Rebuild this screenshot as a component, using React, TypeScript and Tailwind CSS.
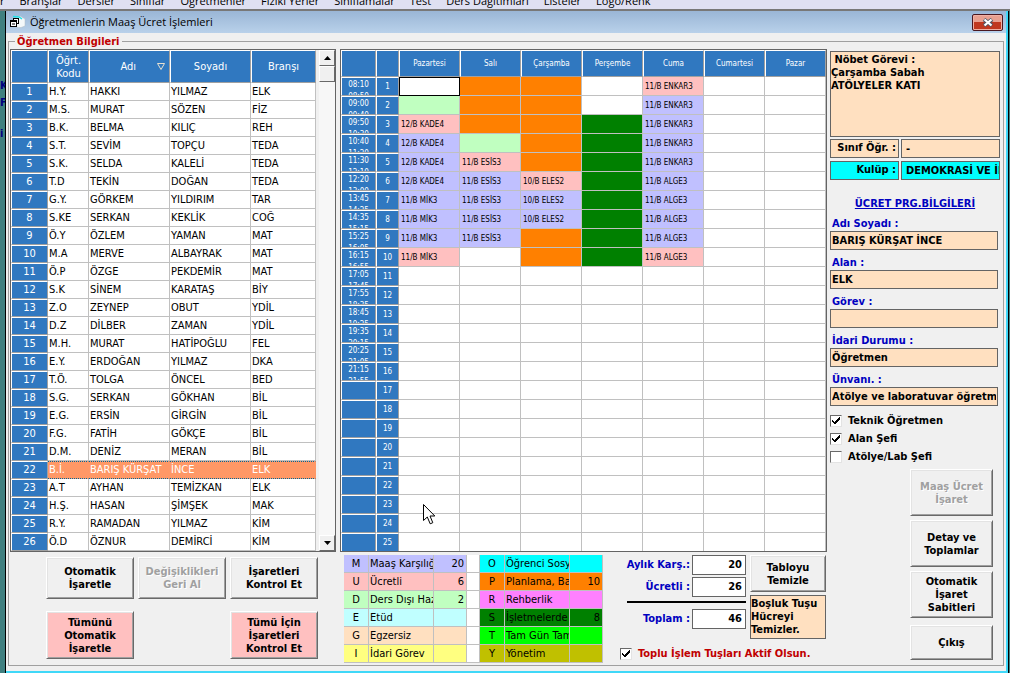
import React, { useState } from "react";
import clsx from "clsx";

const menuItems = [
  "Branşlar",
  "Dersler",
  "Sınıflar",
  "Öğretmenler",
  "Fiziki Yerler",
  "Sınıflamalar",
  "Test",
  "Ders Dağıtımları",
  "Listeler",
  "Logo/Renk",
];

const teachers = [
  ["H.Y.", "HAKKI", "YILMAZ", "ELK"],
  ["M.S.", "MURAT", "SÖZEN", "FİZ"],
  ["B.K.", "BELMA", "KILIÇ", "REH"],
  ["S.T.", "SEVİM", "TOPÇU", "TEDA"],
  ["S.K.", "SELDA", "KALELİ", "TEDA"],
  ["T.D", "TEKİN", "DOĞAN", "TEDA"],
  ["G.Y.", "GÖRKEM", "YILDIRIM", "TAR"],
  ["S.KE", "SERKAN", "KEKLİK", "COĞ"],
  ["Ö.Y", "ÖZLEM", "YAMAN", "MAT"],
  ["M.A", "MERVE", "ALBAYRAK", "MAT"],
  ["Ö.P", "ÖZGE", "PEKDEMİR", "MAT"],
  ["S.K", "SİNEM", "KARATAŞ", "BİY"],
  ["Z.O", "ZEYNEP", "OBUT", "YDİL"],
  ["D.Z", "DİLBER", "ZAMAN", "YDİL"],
  ["M.H.", "MURAT", "HATİPOĞLU", "FEL"],
  ["E.Y.", "ERDOĞAN", "YILMAZ", "DKA"],
  ["T.Ö.", "TOLGA", "ÖNCEL", "BED"],
  ["S.G.", "SERKAN", "GÖKHAN", "BİL"],
  ["E.G.", "ERSİN", "GİRGİN", "BİL"],
  ["F.G.", "FATİH", "GÖKÇE", "BİL"],
  ["D.M.", "DENİZ", "MERAN", "BİL"],
  ["B.İ.", "BARIŞ KÜRŞAT", "İNCE", "ELK"],
  ["A.T", "AYHAN", "TEMİZKAN", "ELK"],
  ["H.Ş.", "HASAN", "ŞİMŞEK", "MAK"],
  ["R.Y.", "RAMADAN", "YILMAZ", "KİM"],
  ["Ö.D", "ÖZNUR", "DEMİRCİ", "KİM"],
];

const days = ["Pazartesi", "Salı", "Çarşamba", "Perşembe", "Cuma", "Cumartesi", "Pazar"];

const hours = [
  ["08:10", "08:50"],
  ["09:00", "09:40"],
  ["09:50", "10:30"],
  ["10:40", "11:20"],
  ["11:30", "12:10"],
  ["12:20", "13:00"],
  ["13:45", "14:25"],
  ["14:35", "15:15"],
  ["15:25", "16:05"],
  ["16:15", "16:55"],
  ["17:05", "17:45"],
  ["17:55", "18:35"],
  ["18:45", "19:25"],
  ["19:35", "20:15"],
  ["20:25", "21:05"],
  ["21:15", "21:55"],
];

// first letter is the mark of the lesson, the rest is the lesson itself
const schedule: string[][] = [
  ["X", "P", "P", "", "U11/B ENKAR3"],
  ["D", "P", "P", "", "M11/B ENKAR3"],
  ["U12/B KADE4", "P", "P", "S", "M11/B ENKAR3"],
  ["M12/B KADE4", "D", "P", "S", "M11/B ENKAR3"],
  ["M12/B KADE4", "U11/B ESİS3", "P", "S", "M11/B ENKAR3"],
  ["M12/B KADE4", "M11/B ESİS3", "U10/B ELES2", "S", "M11/B ALGE3"],
  ["M11/B MİK3", "M11/B ESİS3", "M10/B ELES2", "S", "M11/B ALGE3"],
  ["M11/B MİK3", "M11/B ESİS3", "M10/B ELES2", "S", "M11/B ALGE3"],
  ["M11/B MİK3", "M11/B ESİS3", "P", "S", "M11/B ALGE3"],
  ["U11/B MİK3", "", "P", "S", "U11/B ALGE3"],
];

const markColors: Record<string, string> = {
  M: "bg-[#c0c0ff]",
  U: "bg-[#ffc0c0]",
  D: "bg-[#c0ffc0]",
  E: "bg-[#c0ffff]",
  G: "bg-[#ffe0c0]",
  I: "bg-[#ffff80]",
  O: "bg-[#00ffff]",
  P: "bg-[#ff8000]",
  R: "bg-[#ff80ff]",
  S: "bg-[#008000]",
  T: "bg-[#00ff00]",
  Y: "bg-[#c0c000]",
  X: "bg-white outline-1 -outline-offset-1 outline-black",
};

const legendRows = [
  [["M", "Maaş Karşılığı", "20"], ["O", "Öğrenci Sosyal", ""]],
  [["U", "Ücretli", "6"], ["P", "Planlama, Bakım", "10"]],
  [["D", "Ders Dışı Hazırlık", "2"], ["R", "Rehberlik", ""]],
  [["E", "Etüd", ""], ["S", "İşletmelerde", "8"]],
  [["G", "Egzersiz", ""], ["T", "Tam Gün Tam Yıl", ""]],
  [["I", "İdari Görev", ""], ["Y", "Yönetim", ""]],
];

const fields = [
  { id: "name", label: "Adı Soyadı :", value: "BARIŞ KÜRŞAT İNCE" },
  { id: "area", label: "Alan :", value: "ELK" },
  { id: "duty", label: "Görev :", value: "" },
  { id: "admin", label: "İdari Durumu :", value: "Öğretmen" },
  { id: "title", label: "Ünvanı. :", value: "Atölye ve laboratuvar öğretmeni" },
];

const headCell =
  "border-t border-l border-r border-b border-t-white border-l-white border-r-[#a0a0a0] border-b-[#a0a0a0] bg-[#3078c0] p-0 font-normal text-white overflow-hidden";
const bodyCell = "border-r border-b border-[#c0c0c0] p-0 overflow-hidden whitespace-nowrap";

interface ButtonProps {
  lines: string[];
  className?: string;
  disabled?: boolean;
}

function ClassicButton({ lines, className, disabled }: ButtonProps) {
  return (
    <button
      type="button"
      disabled={disabled}
      className={clsx(
        "flex shrink-0 flex-col items-center justify-center border border-t-white border-l-white border-r-[#696969] border-b-[#696969] font-bold leading-[13px] shadow-[inset_1px_1px_0_#e3e3e3,inset_-1px_-1px_0_#a0a0a0]",
        disabled && "text-[#a0a0a0] [text-shadow:1px_1px_0_white]",
        className
      )}
    >
      {lines.map((line) => (
        <span key={line}>{line}</span>
      ))}
    </button>
  );
}

interface CheckProps {
  label: string;
  defaultChecked?: boolean;
  className?: string;
}

function CheckLine({ label, defaultChecked, className }: CheckProps) {
  return (
    <label className={clsx("flex h-[18px] items-center gap-1.5 font-bold whitespace-nowrap", className)}>
      <span className="relative block size-3">
        <input
          type="checkbox"
          defaultChecked={defaultChecked}
          className="peer block size-3 appearance-none border border-t-[#696969] border-l-[#696969] border-r-[#e3e3e3] border-b-[#e3e3e3] bg-white"
        />
        <svg
          viewBox="0 0 12 12"
          className="pointer-events-none absolute inset-0 hidden size-3 peer-checked:block"
          shapeRendering="crispEdges"
        >
          <path d="M2 4v3l2.5 2.5L10 4V2L4.5 7z" fill="black" />
        </svg>
      </span>
      {label}
    </label>
  );
}

function ScrollBar() {
  const part =
    "flex h-4 w-4 shrink-0 items-center justify-center border border-t-white border-l-white border-r-[#696969] border-b-[#696969] bg-[#f0f0f0]";
  return (
    <div className="flex w-4 shrink-0 flex-col bg-[#f7f7f7]">
      <button type="button" aria-label="Yukarı" className={part}>
        <svg viewBox="0 0 7 4" className="h-1 w-[7px]">
          <path d="M0 4L3.5 0L7 4z" />
        </svg>
      </button>
      <div className={part} />
      <div className="flex-1" />
      <button type="button" aria-label="Aşağı" className={part}>
        <svg viewBox="0 0 7 4" className="h-1 w-[7px]">
          <path d="M0 0L3.5 4L7 0z" />
        </svg>
      </button>
    </div>
  );
}

function TeacherTable() {
  const [selected, setSelected] = useState(21);

  return (
    <div className="flex h-[503px] overflow-hidden border border-[#646464] bg-[#f0f0f0]">
      <table className="w-[305px] table-fixed border-separate border-spacing-0 bg-white">
        <colgroup>
          <col className="w-[37px]" />
          <col className="w-[41px]" />
          <col className="w-[81px]" />
          <col className="w-[81px]" />
          <col />
        </colgroup>
        <thead>
          <tr className="h-[33px]">
            <th className={headCell}></th>
            <th className={clsx(headCell, "leading-[13px]")}>
              Öğrt.
              <br />
              Kodu
            </th>
            <th className={headCell}>
              <span className="flex items-center justify-end gap-[21px] pr-1">
                Adı
                <svg viewBox="0 0 8 7" className="h-[7px] w-2" fill="none" stroke="#e8e0d0">
                  <path d="M0.5 0.5h7L4 6.5z" />
                </svg>
              </span>
            </th>
            <th className={headCell}>Soyadı</th>
            <th className={headCell}>Branşı</th>
          </tr>
        </thead>
        <tbody>
          {teachers.map((row, i) => (
            <tr
              key={i}
              onClick={() => setSelected(i)}
              className={clsx("h-[18px] leading-4", i === selected && "bg-[#ff9866] text-white")}
            >
              <th className={headCell}>{i + 1}</th>
              {row.map((cell, j) => (
                <td
                  key={j}
                  className={clsx(
                    bodyCell,
                    "pl-px",
                    i === selected && "border-t border-dotted border-y-[#006799] border-r-[#ff9866]"
                  )}
                >
                  {cell}
                </td>
              ))}
            </tr>
          ))}
        </tbody>
      </table>
      <div className="flex-1" />
      <ScrollBar />
    </div>
  );
}

function ScheduleTable() {
  return (
    <div className="relative h-[503px] overflow-hidden border border-[#646464] bg-white">
      <table className="w-full table-fixed border-separate border-spacing-0 text-[8px]">
        <colgroup>
          <col className="w-[35px]" />
          <col className="w-[23px]" />
        </colgroup>
        <thead>
          <tr className="h-[27px]">
            <th className={headCell}></th>
            <th className={headCell}></th>
            {days.map((day) => (
              <th key={day} className={headCell}>
                {day}
              </th>
            ))}
          </tr>
        </thead>
        <tbody>
          {Array.from({ length: 25 }, (_, i) => (
            <tr key={i} className="h-[19px] leading-[17px]">
              <th className={headCell}>
                <div className="h-[17px] overflow-hidden pt-px leading-3">
                  {hours[i]?.map((time) => (
                    <div key={time}>{time}</div>
                  ))}
                </div>
              </th>
              <th className={headCell}>{i + 1}</th>
              {days.map((day, j) => {
                const entry = schedule[i]?.[j] ?? "";
                return (
                  <td key={day} className={clsx(bodyCell, "pl-0.5", entry && markColors[entry[0]])}>
                    {entry.slice(1)}
                  </td>
                );
              })}
            </tr>
          ))}
        </tbody>
      </table>
      {/* mouse pointer */}
      <svg viewBox="0 0 12 21" className="absolute top-[454px] left-[82px] h-[21px] w-3">
        <path
          d="M0.5 0.5V16.5L4.3 13L7.2 19.8L9.8 18.7L7 12H11.8z"
          fill="white"
          stroke="black"
          strokeWidth="1"
        />
      </svg>
    </div>
  );
}

function LegendTable() {
  return (
    <table className="w-[259px] shrink-0 table-fixed self-start border-separate border-spacing-0 bg-white">
      <colgroup>
        <col className="w-[25px]" />
        <col className="w-[65px]" />
        <col className="w-[33px]" />
        <col className="w-[13px]" />
        <col className="w-[25px]" />
        <col className="w-[65px]" />
        <col className="w-[33px]" />
      </colgroup>
      <tbody>
        {legendRows.map(([left, right]) => (
          <tr key={left[0]} className="h-[18px] leading-[17px]">
            <td className={clsx(bodyCell, "text-center", markColors[left[0]])}>{left[0]}</td>
            <td className={clsx(bodyCell, "pl-px", markColors[left[0]])}>{left[1]}</td>
            <td className={clsx(bodyCell, "pr-0.5 text-right", markColors[left[0]])}>{left[2]}</td>
            <td className={bodyCell}></td>
            <td className={clsx(bodyCell, "text-center", markColors[right[0]])}>{right[0]}</td>
            <td className={clsx(bodyCell, "pl-px", markColors[right[0]])}>{right[1]}</td>
            <td className={clsx(bodyCell, "pr-0.5 text-right", markColors[right[0]])}>{right[2]}</td>
          </tr>
        ))}
      </tbody>
    </table>
  );
}

function TotalField({ id, label, value }: { id: string; label: string; value: string }) {
  return (
    <div className="flex items-center justify-end gap-0.5">
      <label htmlFor={id} className="font-bold whitespace-nowrap text-[#0000c0]">
        {label}
      </label>
      <input
        id={id}
        readOnly
        value={value}
        className="h-5 w-[54px] rounded-none border border-[#646464] bg-white pr-[3px] pb-0.5 text-right font-bold outline-none"
      />
    </div>
  );
}

function InfoPanel() {
  return (
    <div className="flex w-[170px] shrink-0 flex-col pt-0.5">
      <textarea
        aria-label="Nöbet Görevi"
        readOnly
        value={" Nöbet Görevi :\nÇarşamba Sabah\nATÖLYELER KATI"}
        className="block h-[86px] w-full resize-none overflow-hidden border border-[#646464] bg-[#ffe0c0] pt-px font-bold leading-[13px] outline-none"
      />
      <div className="mt-0.5 flex gap-0.5">
        <label htmlFor="class" className="h-[19px] w-[69px] border border-[#646464] bg-[#ffe0c0] pr-0.5 text-right font-bold">
          Sınıf Öğr. :
        </label>
        <input
          id="class"
          readOnly
          value="-"
          className="h-[19px] min-w-0 flex-1 border border-[#646464] bg-[#ffe0c0] pl-1 font-bold outline-none"
        />
      </div>
      <div className="mt-[3px] flex gap-0.5">
        <label htmlFor="club" className="h-[19px] w-[69px] border border-[#646464] bg-[#00ffff] pr-0.5 text-right font-bold">
          Kulüp :
        </label>
        <input
          id="club"
          readOnly
          value="DEMOKRASİ VE İNSAN HAKLARI"
          className="h-[19px] min-w-0 flex-1 border border-[#646464] bg-[#00ffff] pl-1 font-bold outline-none"
        />
      </div>
      <h2 className="mt-4 text-center font-bold text-[#0000c0] underline">ÜCRET PRG.BİLGİLERİ</h2>
      <div className="mt-[5px] flex flex-col gap-1.5 pr-0.5">
        {fields.map((field) => (
          <div key={field.id}>
            <label htmlFor={field.id} className="block h-[14px] pl-0.5 font-bold leading-[14px] text-[#0000c0]">
              {field.label}
            </label>
            <input
              id={field.id}
              readOnly
              value={field.value}
              className="block h-[19px] w-full border border-[#646464] bg-[#ffe0c0] px-px font-bold outline-none"
            />
          </div>
        ))}
      </div>
      <div className="mt-1.5 flex flex-col">
        <CheckLine label="Teknik Öğretmen" defaultChecked />
        <CheckLine label="Alan Şefi" defaultChecked />
        <CheckLine label="Atölye/Lab Şefi" />
      </div>
      <div className="mt-[3px] mr-[7px] flex flex-col items-end gap-1">
        <ClassicButton lines={["Maaş Ücret", "İşaret"]} disabled className="h-[47px] w-[83px]" />
        <ClassicButton lines={["Detay ve", "Toplamlar"]} className="h-[47px] w-[83px]" />
        <ClassicButton lines={["Otomatik", "İşaret", "Sabitleri"]} className="h-[47px] w-[83px]" />
        <ClassicButton lines={["Çıkış"]} className="mt-[3px] h-[35px] w-[83px]" />
      </div>
    </div>
  );
}

export default function App() {
  return (
    <div className="flex min-h-screen flex-col overflow-hidden bg-[#408080] font-['DejaVu_Sans_Condensed','DejaVu_Sans',sans-serif] text-[11px] leading-4 text-black">
      <nav className="flex h-[11px] items-end gap-[15px] overflow-hidden border-b-2 border-[#787878] bg-[#dfe0f2] font-['Open_Sans',sans-serif] whitespace-nowrap">
        <span>r</span>
        {menuItems.map((item) => (
          <a key={item} href="#">
            {item}
          </a>
        ))}
      </nav>

      <div className="flex flex-1 pr-px pb-px">
        <div className="w-[5px] shrink-0 overflow-hidden pt-[66px] font-bold leading-[17px] text-[#000080]">
          <div>K</div>
          <div>F</div>
          <div className="pt-3.5">i</div>
        </div>

        <main className="flex min-w-0 flex-1 flex-col border-x border-b border-black">
          <div className="flex flex-1 flex-col border-r-2 border-b-2 border-[#40d8f8] bg-[#f0f0f0]">
            <header className="flex h-[22px] items-center bg-linear-to-b from-[#9ab6d6] to-[#b9d1ea] pr-[3px] pl-1">
              <svg viewBox="0 0 16 14" className="mr-1 h-3.5 w-4">
                <path d="M4 3.5L10 1l5 3v7l-4 1.5H7z" fill="#f4f8fa" stroke="#b0bcc4" strokeWidth="0.5" />
                <path d="M3 1.5l6 0.5 3 2" fill="none" stroke="#20e0e8" strokeWidth="1.5" />
                <rect x="3.5" y="3.5" width="5" height="5" fill="white" stroke="black" />
                <rect x="0.5" y="5.5" width="6" height="6" fill="white" stroke="black" />
                <path d="M1 6.5h5M2 9h3" stroke="black" />
              </svg>
              <h1 className="flex-1 font-['Open_Sans',sans-serif]">Öğretmenlerin Maaş Ücret İşlemleri</h1>
              <button
                type="button"
                aria-label="Kapat"
                className="flex h-[17px] w-[31px] items-center justify-center rounded-xs border border-[#4a1820] bg-linear-to-b from-[#e8a090] from-45% to-[#c03820] to-50% shadow-[inset_0_0_0_1px_#f0b0a4]"
              >
                <svg viewBox="0 0 12 9" className="h-[9px] w-3">
                  <path d="M2 1.5l8 6M10 1.5l-8 6" stroke="#505868" strokeWidth="4" />
                  <path d="M2.5 1.5l7 6M9.5 1.5l-7 6" stroke="white" strokeWidth="2.2" />
                </svg>
              </button>
            </header>

            <fieldset className="mx-0.5 mt-px mb-[5px] flex-1 border border-[#a0a0a0] pr-[3px] pb-0.5 pl-px">
              <legend className="ml-[5px] px-0.5 font-bold leading-[15px] text-[#c00000]">Öğretmen Bilgileri</legend>
              <div className="flex">
                <div className="w-[326px] shrink-0">
                  <TeacherTable />
                  <div className="mt-[5px] flex gap-1 pl-[36px]">
                    <ClassicButton lines={["Otomatik", "İşaretle"]} className="h-[42px] w-[88px]" />
                    <ClassicButton lines={["Değişiklikleri", "Geri Al"]} disabled className="h-[42px] w-[88px]" />
                    <ClassicButton lines={["İşaretleri", "Kontrol Et"]} className="h-[42px] w-[88px]" />
                  </div>
                  <div className="mt-3 flex justify-between pr-[18px] pl-[36px]">
                    <ClassicButton lines={["Tümünü", "Otomatik", "İşaretle"]} className="h-12 w-[88px] bg-[#ffc0c0]" />
                    <ClassicButton lines={["Tümü İçin", "İşaretleri", "Kontrol Et"]} className="h-12 w-[88px] bg-[#ffc0c0]" />
                  </div>
                </div>

                <div className="ml-1 min-w-0 flex-1">
                  <ScheduleTable />
                  <div className="mt-[3px] flex pr-px pl-1">
                    <LegendTable />
                    <div className="flex flex-1 flex-col pl-[17px]">
                      <div className="flex flex-1 justify-end gap-1">
                        <div className="flex flex-col gap-0.5">
                          <TotalField id="monthly" label="Aylık Karş.:" value="20" />
                          <TotalField id="paid" label="Ücretli :" value="26" />
                          <div className="mt-0.5 mb-1 h-0.5 bg-black" />
                          <TotalField id="total" label="Toplam :" value="46" />
                        </div>
                        <div className="flex w-[76px] flex-col gap-[3px]">
                          <ClassicButton lines={["Tabloyu", "Temizle"]} className="h-[37px] w-full" />
                          <p className="h-11 border border-[#646464] bg-[#ffe0c0] pt-px font-bold leading-[13px]">
                            Boşluk Tuşu
                            <br />
                            Hücreyi
                            <br />
                            Temizler.
                          </p>
                        </div>
                      </div>
                      <CheckLine label="Toplu İşlem Tuşları Aktif Olsun." defaultChecked className="text-[#c00000]" />
                    </div>
                  </div>
                </div>

                <div className="ml-[3px]">
                  <InfoPanel />
                </div>
              </div>
            </fieldset>
          </div>
        </main>
      </div>
    </div>
  );
}
